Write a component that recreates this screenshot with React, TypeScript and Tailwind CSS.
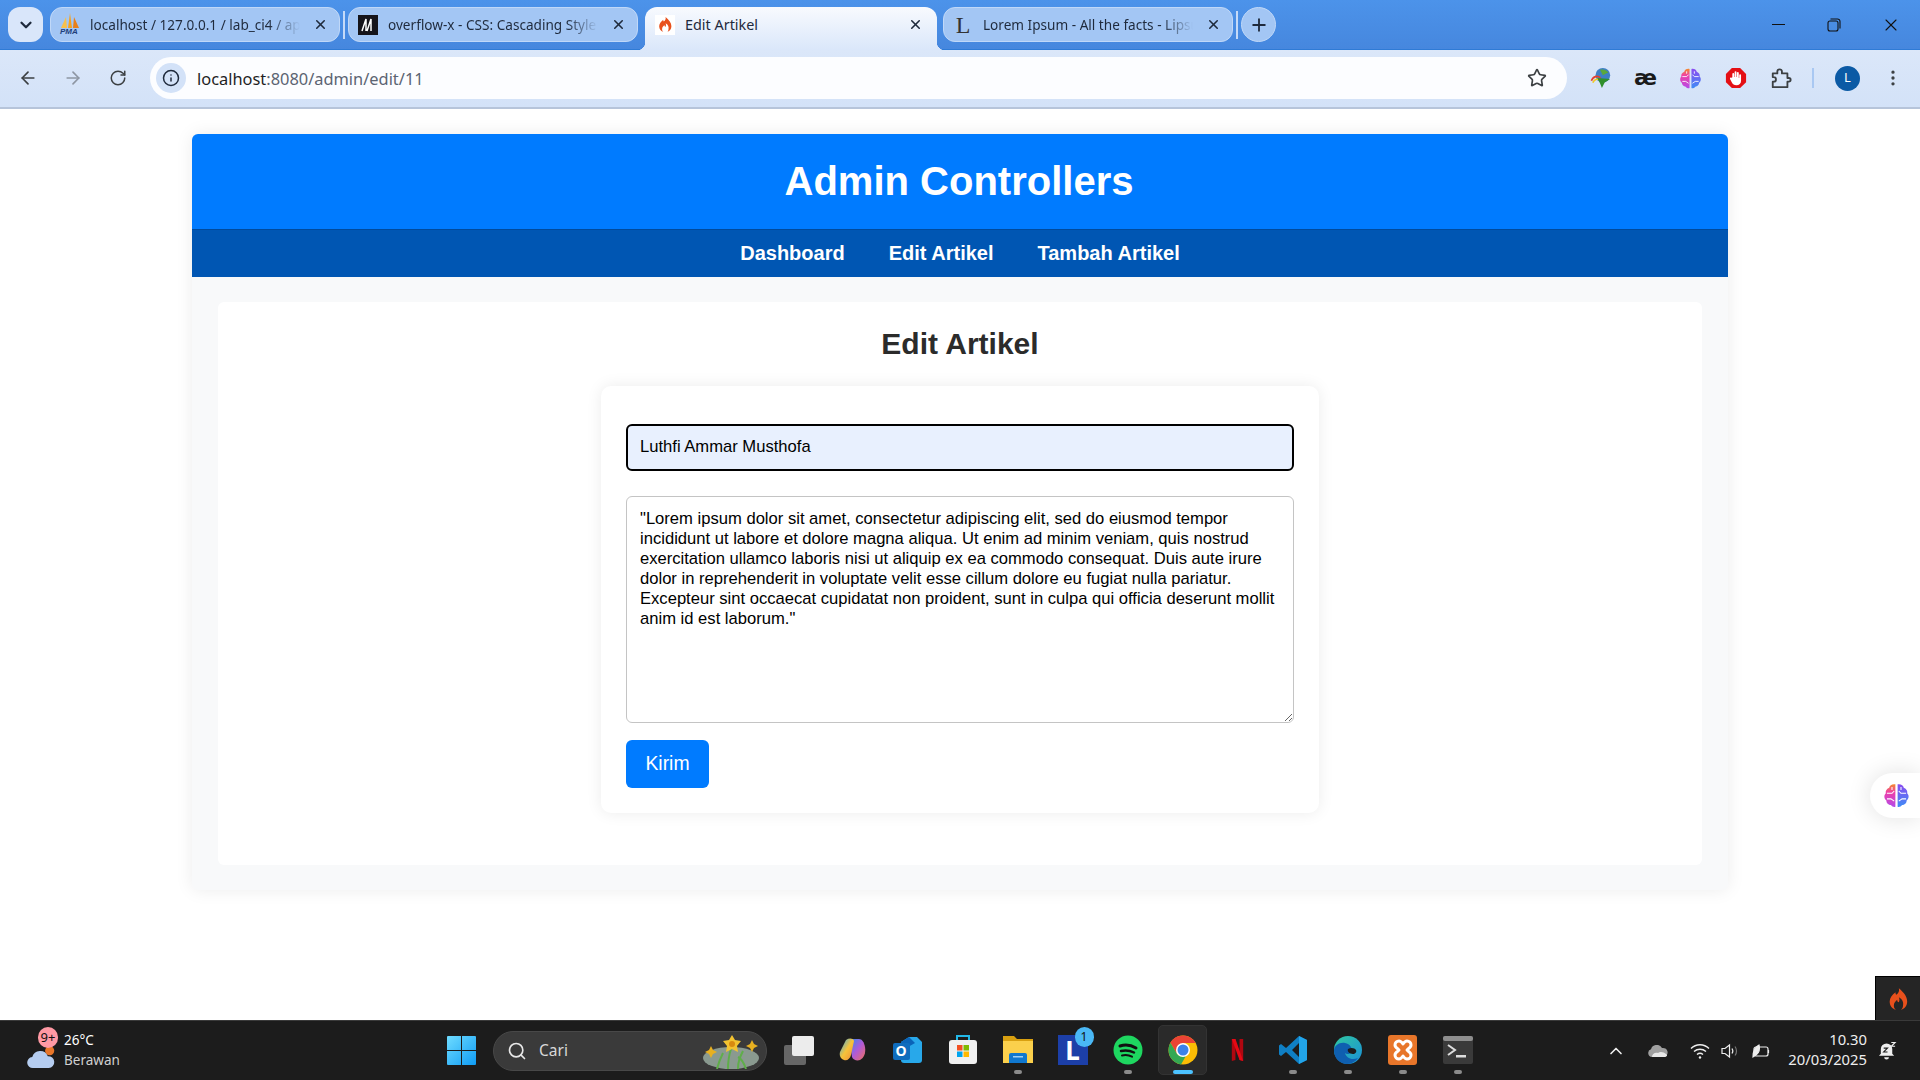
import React from 'react';
import { ArrowLeft, ArrowRight, ChevronDown, ChevronUp, EllipsisVertical, Info, Plus, RotateCw, Search, Star, X } from 'lucide-react';

const Flame = ({ className = '' }: { className?: string }) => (
    <svg viewBox="0 0 24 28" className={className}>
        <path
            fill="#e8501c"
            d="M13 1c1 4-1 6-3 8-1-1-1-2-1-3C5 9 2 13 2 17c0 5 3 9 8 10-2-1-3-3-3-5 0-3 2-5 4-7 0 2 1 3 2 3 1-2 1-4 0-6 4 2 6 6 5 10 0 2-1 4-3 5 5-1 8-5 8-10 0-6-4-11-10-16z"
        />
    </svg>
);

const Brain = ({ className = '', id }: { className?: string; id: string }) => (
    <svg viewBox="0 0 24 24" className={className}>
        <defs>
            <linearGradient id={`${id}L`} x1="0" y1="0" x2="0" y2="1">
                <stop offset="0" stopColor="#f58a2a" />
                <stop offset="0.35" stopColor="#ee3fa8" />
                <stop offset="1" stopColor="#b44be8" />
            </linearGradient>
            <linearGradient id={`${id}R`} x1="0" y1="0" x2="0" y2="1">
                <stop offset="0" stopColor="#8a4cf0" />
                <stop offset="1" stopColor="#3f8cf5" />
            </linearGradient>
        </defs>
        <path fill={`url(#${id}L)`} d="M11 2C8 1.500 6 3 5.500 5 3 6 2 8 2.500 10 0.500 12 1 15 3 16.500 3 19 5 20.500 7 20.500 8 22 10 22.500 11 22z" />
        <path fill={`url(#${id}R)`} d="M13 2c3-.5 5 1 5.500 3C21 6 22 8 21.500 10 23.500 12 23 15 21 16.500 21 19 19 20.500 17 20.500 16 22 14 22.500 13 22z" />
        <path stroke="#fff" strokeWidth="0.9" fill="none" d="M3.500 10H8l2-2M3.500 15H7l3 2M8 4.500V7M20.500 10H16l-2-2M20.500 15H17l-3 2M16 4.500V7" />
    </svg>
);

const PmaIcon = () => (
    <div className="relative w-5 h-6 shrink-0">
        <svg viewBox="0 0 20 18" className="absolute top-0 left-0 w-5 h-[18px]">
            <path fill="#f6a21d" d="M10 0l2 15H8z" />
            <path fill="#f8c04a" d="M6 4L7 15H1z" />
            <path fill="#e8801a" d="M14 4l5 11h-6z" />
        </svg>
        <span className="absolute left-0 top-[14px] text-[8px] leading-[9px] italic font-bold text-[#1f3f7a] font-['Liberation_Sans',sans-serif]">
            PMA
        </span>
    </div>
);

const MdnIcon = () => (
    <svg viewBox="0 0 20 20" className="w-5 h-5 shrink-0">
        <rect width="20" height="20" fill="#15141a" />
        <path d="M4 16L8 4v12M9 16l4-12v12" fill="none" stroke="#fff" strokeWidth="1.500" />
    </svg>
);

const LoremIcon = () => (
    <div className="w-5 h-6 shrink-0 flex items-center justify-center text-[#333] text-[24px] leading-none font-['Liberation_Serif',serif]">
        L
    </div>
);

const TabSeparator = ({ className = '' }: { className?: string }) => (
    <div className={`w-[2px] h-[28px] bg-[#c5daf8] shrink-0 ${className}`} />
);

const InactiveTab = ({ icon, title, width }: { icon: React.ReactNode; title: string; width: string }) => (
    <div className={`${width} h-[35px] shrink-0 flex items-center pl-[9px] pr-[11px] rounded-[12px] bg-[#a3c6f4] border border-[#c0d8f8] gap-[10px]`}>
        {icon}
        <span className="flex-1 min-w-0 pt-[1px] mr-[3px] overflow-hidden whitespace-nowrap text-[13.6px] text-[#1f2a3c] [mask-image:linear-gradient(to_right,black_85%,transparent)]">
            {title}
        </span>
        <X size={15} strokeWidth={2.5} className="text-[#1f2a3c] shrink-0" />
    </div>
);

const ActiveTab = () => (
    <div className="relative w-[292px] h-[43px] shrink-0 self-start flex items-center pl-[10px] pr-[14px] pb-[8px] rounded-t-[12px] bg-gradient-to-b from-[#f8fafe] to-[#dae7fa] gap-[10px]">
        <div className="absolute bottom-0 -left-[8px] w-[8px] h-[8px] bg-[radial-gradient(circle_at_0_0,transparent_8px,#dae7fa_8.5px)]" />
        <div className="absolute bottom-0 -right-[8px] w-[8px] h-[8px] bg-[radial-gradient(circle_at_100%_0,transparent_8px,#dae7fa_8.5px)]" />
        <div className="w-5 h-5 bg-white flex items-center justify-center shrink-0">
            <Flame className="w-[14px] h-[17px]" />
        </div>
        <span className="flex-1 pt-[1px] text-[14.4px] text-[#1f2a3c] whitespace-nowrap">Edit Artikel</span>
        <X size={15} strokeWidth={2.5} className="text-[#1f2a3c] shrink-0" />
    </div>
);

const IdmIcon = () => (
    <svg viewBox="0 0 24 24" className="w-[22px] h-[22px]">
        <circle cx="14" cy="9" r="8" fill="#3e7fc4" />
        <path fill="#5aa83c" d="M11 3c3-1 7 0 9 3l-6 3z" />
        <path fill="none" stroke="#e4402c" strokeWidth="1.800" d="M1.500 15c2-5 7-6 10-3" />
        <path fill="none" stroke="#f2c81e" strokeWidth="1.800" d="M3 17c2-4 6-5 9-2" />
        <path fill="#2f8f2c" d="M8 12l14 1-6 4-3 6-2-5z" />
    </svg>
);

const StopIcon = () => (
    <svg viewBox="0 0 24 24" className="w-[22px] h-[22px]">
        <path fill="#e40f14" d="M7.500 1h9L23 7.500v9L16.500 23h-9L1 16.500v-9z" />
        <path fill="#fff" d="M8 11V7.500a1 1 0 012 0V11h.5V5.500a1 1 0 012 0V11h.5V6.500a1 1 0 012 0V12h.5V9a1 1 0 012 0v6c0 3-2 5-5 5-2.500 0-4-1-5-3l-2-4c-.5-1 1-2 2-1z" />
    </svg>
);

const PuzzleIcon = () => (
    <svg viewBox="0 0 24 24" className="w-[22px] h-[22px]" fill="none" stroke="#3c4043" strokeWidth="2" strokeLinejoin="round">
        <path d="M3 7h5V5a2.500 2.500 0 015 0v2h6v5h1.500a2 2 0 010 4H19v6H3v-6h1a2.500 2.500 0 000-5H3z" />
    </svg>
);

const Chrome = () => (
    <div className="flex items-center justify-between pr-[17px] h-[59px] pb-[1px] bg-gradient-to-b from-[#dbe7f9] to-[#d3e2f8] border-b-2 border-[#b6c4da]">
        <div className="flex items-center">
            <ArrowLeft size={20} strokeWidth={2} className="ml-[18px] text-[#3c4043]" />
            <ArrowRight size={20} strokeWidth={2} className="ml-[25px] text-[#8e96a3]" />
            <RotateCw size={18} strokeWidth={2} className="ml-[26px] text-[#3c4043]" />
            <div className="ml-[23px] w-[1417px] h-[42px] rounded-full bg-[#fcfdff] flex items-center pl-[6px] pr-[20px]">
                <div className="w-[30px] h-[30px] rounded-full bg-[#d3e2f8] flex items-center justify-center">
                    <Info size={18} strokeWidth={2} className="text-[#1f2a3c]" />
                </div>
                <span className="ml-[11px] pt-[2px] text-[16.4px] text-[#1f1f1f]">
                    localhost<span className="text-[#5b6472]">:8080/admin/edit/11</span>
                </span>
                <Star size={20} strokeWidth={2} className="ml-auto text-[#3c4043]" />
            </div>
        </div>
        <div className="flex items-center">
            <div className="w-[45px] flex justify-center"><IdmIcon /></div>
            <div className="w-[45px] flex justify-center text-[22px] leading-none font-bold text-[#1a1a1a] font-['DejaVu_Sans',sans-serif]">æ</div>
            <div className="w-[45px] flex justify-center"><Brain id="toolbarBrain" className="w-[23px] h-[23px]" /></div>
            <div className="w-[45px] flex justify-center"><StopIcon /></div>
            <div className="w-[45px] flex justify-center"><PuzzleIcon /></div>
            <div className="w-[2px] h-5 bg-[#a9c8f2] ml-[9px] mr-[21px]" />
            <div className="w-[25px] h-[25px] rounded-full bg-[#0b5aa5] flex items-center justify-center text-white text-[13px]">L</div>
            <EllipsisVertical size={20} className="ml-[23px] text-[#3c4043]" />
        </div>
    </div>
);

const TabStrip = () => (
    <div className="h-[50px] shrink-0 flex items-center bg-gradient-to-b from-[#4c93ea] to-[#4687de] border-b border-[#2f7bd6]">
        <div className="ml-[8px] w-[35px] h-[35px] rounded-[12px] bg-[#d9e6fa] flex items-center justify-center self-start mt-[7px]">
            <ChevronDown size={18} strokeWidth={3} className="text-[#1f2a3c]" />
        </div>
        <div className="ml-[7px] flex items-start self-start mt-[7px]">
            <InactiveTab icon={<PmaIcon />} title="localhost / 127.0.0.1 / lab_ci4 / app" width="w-[290px]" />
            <TabSeparator className="mx-[3px] mt-[4px]" />
            <InactiveTab icon={<MdnIcon />} title="overflow-x - CSS: Cascading Style Sheets" width="w-[290px]" />
            <div className="w-[7px]" />
            <ActiveTab />
            <div className="w-[6px]" />
            <InactiveTab icon={<LoremIcon />} title="Lorem Ipsum - All the facts - Lipsum" width="w-[290px]" />
            <TabSeparator className="mx-[3px] mt-[4px]" />
            <div className="w-[35px] h-[35px] rounded-full bg-[#a3c6f4] border border-[#c0d8f8] flex items-center justify-center">
                <Plus size={20} strokeWidth={2.2} className="text-[#1f2a3c]" />
            </div>
        </div>
        <div className="ml-auto flex items-center text-[#111]">
            <div className="w-[56px] flex justify-center"><div className="w-[13px] h-[1.5px] bg-[#111]" /></div>
            <div className="w-[56px] flex justify-center">
                <svg viewBox="0 0 14 14" className="w-[14px] h-[14px]" fill="none" stroke="#111" strokeWidth="1.1">
                    <rect x="1" y="3" width="10" height="10" rx="2" />
                    <path d="M3.500 1h7a2.500 2.500 0 012.500 2.500v7" />
                </svg>
            </div>
            <div className="w-[58px] flex justify-center"><X size={20} strokeWidth={1.3} /></div>
        </div>
    </div>
);

const Page = () => (
    <div className="relative flex-1 bg-white overflow-hidden pt-[25px] font-['Liberation_Sans',Arial,sans-serif]">
        <div className="w-[1536px] mx-auto bg-[#f8f9fa] rounded-[6px] shadow-[0_0_18px_rgba(0,0,0,0.08)]">
            <header className="h-[95px] bg-[#007bff] rounded-t-[6px] flex items-center justify-center pb-[2px] pr-[2px]">
                <h1 className="text-[40px] leading-none font-bold text-white">Admin Controllers</h1>
            </header>
            <nav className="h-[48px] bg-[#0056b3] border-t border-[#004a9c] flex items-center justify-center gap-[44px] pb-[2px]">
                <a className="text-[20px] font-bold text-white">Dashboard</a>
                <a className="text-[20px] font-bold text-white">Edit Artikel</a>
                <a className="text-[20px] font-bold text-white">Tambah Artikel</a>
            </nav>
            <div className="px-[26px] pt-[25px] pb-[25px]">
                <div className="bg-white rounded-[6px] pt-[22px] pb-[52px]">
                    <h2 className="text-[30px] leading-[40px] font-bold text-[#2b2b2b] text-center">Edit Artikel</h2>
                    <form className="w-[718px] mx-auto mt-[22px] bg-white rounded-[10px] shadow-[0_0_16px_rgba(0,0,0,0.08)] px-[25px] pt-[38px] pb-[25px]">
                        <input
                            type="text"
                            defaultValue="Luthfi Ammar Musthofa"
                            className="block w-full h-[47px] px-[12px] pb-[2px] rounded-[6px] border-2 border-black bg-[#e8f0fe] text-[16.6px] text-black outline-none"
                        />
                        <textarea
                            rows={11}
                            defaultValue={'"Lorem ipsum dolor sit amet, consectetur adipiscing elit, sed do eiusmod tempor incididunt ut labore et dolore magna aliqua. Ut enim ad minim veniam, quis nostrud exercitation ullamco laboris nisi ut aliquip ex ea commodo consequat. Duis aute irure dolor in reprehenderit in voluptate velit esse cillum dolore eu fugiat nulla pariatur. Excepteur sint occaecat cupidatat non proident, sunt in culpa qui officia deserunt mollit anim id est laborum."'}
                            className="block w-full h-[227px] mt-[25px] px-[13px] py-[12px] rounded-[6px] border border-[#c4c4c4] bg-white text-[16.6px] leading-[20px] text-black outline-none"
                        />
                        <button type="button" className="block mt-[17px] w-[83px] h-[48px] rounded-[6px] bg-[#007bff] text-white text-[19.4px]">
                            Kirim
                        </button>
                    </form>
                </div>
            </div>
        </div>
        <div className="absolute right-0 top-[664px] w-[50px] h-[45px] bg-white rounded-l-full shadow-[0_0_24px_rgba(0,0,0,0.12)] flex items-center pl-[13px]">
            <Brain id="sideBrain" className="w-[27px] h-[27px]" />
        </div>
        <div className="absolute right-0 bottom-0 w-[45px] h-[44px] bg-[#252525] border-t border-l border-black flex items-center justify-center">
            <Flame className="w-[20px] h-[24px]" />
        </div>
    </div>
);

const TaskIcon = ({ children, dot = false, active = false }: { children: React.ReactNode; dot?: boolean; active?: boolean }) => (
    <div className="relative w-[55px] h-[59px] flex items-center justify-center pb-[2px]">
        {active && <div className="absolute left-[3px] top-[4px] w-[49px] h-[50px] rounded-[5px] bg-[#2a2a2a] border border-[#333]" />}
        <div className="relative">{children}</div>
        {dot && <div className="absolute bottom-[6px] left-[24px] w-[8px] h-[4px] rounded-full bg-[#8b8b8b]" />}
        {active && <div className="absolute bottom-[6px] left-[18px] w-[20px] h-[4px] rounded-full bg-[#4cc2ff]" />}
    </div>
);

const CopilotIcon = () => (
    <svg viewBox="0 0 28 28" className="w-[28px] h-[28px]">
        <defs>
            <linearGradient id="copA" x1="0" y1="0" x2="1" y2="1">
                <stop offset="0" stopColor="#2fa8f0" />
                <stop offset="0.5" stopColor="#f6c33a" />
                <stop offset="1" stopColor="#f08a3a" />
            </linearGradient>
            <linearGradient id="copB" x1="0" y1="0" x2="1" y2="1">
                <stop offset="0" stopColor="#2f8cf0" />
                <stop offset="0.5" stopColor="#b05ad8" />
                <stop offset="1" stopColor="#f0705a" />
            </linearGradient>
        </defs>
        <path fill="url(#copB)" d="M12 3h8c3 0 5 3 6 8 1 6-1 11-5 13-3 1-7 0-8-3L11 9z" />
        <path fill="url(#copA)" d="M7 4c3-2 7-2 8 1l-3 14c-1 4-4 6-7 5-3-1-5-4-4-8z" />
    </svg>
);

const OutlookIcon = () => (
    <div className="relative w-[30px] h-[30px]">
        <svg viewBox="0 0 30 30" className="absolute inset-0">
            <path fill="#28a8ea" d="M8 7l8-5h8l5 5v18a3 3 0 01-3 3H11a3 3 0 01-3-3z" />
            <path fill="#0a64b8" d="M8 7l8-5 6 6-14 8z" />
        </svg>
        <div className="absolute left-0 top-[8px] w-[17px] h-[17px] rounded-[2px] bg-[#0f6cbd] flex items-center justify-center text-white text-[14px] font-bold leading-none">O</div>
    </div>
);

const StoreIcon = () => (
    <svg viewBox="0 0 30 30" className="w-[30px] h-[30px]">
        <path fill="none" stroke="#22b8e8" strokeWidth="2" d="M9 7V1h12v6" />
        <rect x="1" y="5" width="28" height="24" rx="3" fill="#f0f0f0" />
        <rect x="9" y="10" width="5.500" height="5.500" fill="#f25022" />
        <rect x="15.500" y="10" width="5.500" height="5.500" fill="#7fba00" />
        <rect x="9" y="16.500" width="5.500" height="5.500" fill="#00a4ef" />
        <rect x="15.500" y="16.500" width="5.500" height="5.500" fill="#ffb900" />
    </svg>
);

const FolderIcon = () => (
    <svg viewBox="0 0 30 30" className="w-[30px] h-[30px]">
        <path fill="#d9a010" d="M0 1h11l3 3h16v24H0z" />
        <rect y="6" width="30" height="22" fill="#fbd04c" />
        <path fill="#1078d0" d="M6 20a2 2 0 012-2h14a2 2 0 012 2v8H6z" />
        <rect x="10" y="21" width="10" height="1.500" fill="#9fd0f5" />
    </svg>
);

const SpotifyIcon = () => (
    <svg viewBox="0 0 30 30" className="w-[30px] h-[30px]" fill="none" stroke="#111" strokeLinecap="round">
        <circle cx="15" cy="15" r="14.500" fill="#1ed760" stroke="none" />
        <path strokeWidth="3" d="M7 11c5-1.500 11-1 16 2" />
        <path strokeWidth="2.500" d="M8 16c4-1 9-.5 13 1.500" />
        <path strokeWidth="2" d="M9 20.500c3.500-.8 7-.4 10 1.200" />
    </svg>
);

const ChromeIcon = () => (
    <svg viewBox="0 0 30 30" className="w-[30px] h-[30px]">
        <circle cx="15" cy="15" r="14.500" fill="#fbbc04" />
        <path fill="#ea4335" d="M15 .5A14.500 14.500 0 002.400 7.800L8.800 18.600 15 8h12.600A14.500 14.500 0 0015 .5z" />
        <path fill="#34a853" d="M2.400 7.800A14.500 14.500 0 0013 29.400L19 19 15 21a6 6 0 01-6.200-2.400z" />
        <circle cx="15" cy="15" r="7" fill="#fff" />
        <circle cx="15" cy="15" r="5.500" fill="#3b82ea" />
    </svg>
);

const NetflixIcon = () => (
    <svg viewBox="0 0 16 28" className="w-[13px] h-[23px]">
        <path fill="#b00710" d="M1 1h4.500v26L1 28z" />
        <path fill="#b00710" d="M10.500 1H15v27l-4.500-1z" />
        <path fill="#e50914" d="M1 1h4.500L15 28l-4.500-1z" />
    </svg>
);

const VsCodeIcon = () => (
    <svg viewBox="0 0 30 30" className="w-[30px] h-[30px]">
        <path fill="#0f7fc4" fillRule="evenodd" d="M21 1l8 4v20l-8 4L8 17l-5 4-2-1.500V10.500L3 9l5 4zM21 8l-7 7 7 7z" />
        <path fill="#22a5ea" d="M21 1l8 4v20l-8 4z" />
    </svg>
);

const EdgeIcon = () => (
    <svg viewBox="0 0 30 30" className="w-[30px] h-[30px]">
        <defs>
            <linearGradient id="edgeA" x1="0" y1="0" x2="1" y2="1">
                <stop offset="0" stopColor="#30c8a0" />
                <stop offset="1" stopColor="#1a8fd8" />
            </linearGradient>
        </defs>
        <circle cx="15" cy="15" r="14" fill="url(#edgeA)" />
        <path fill="#0f5fb0" d="M1 16c0-6 6-9 11-8 5 1 8 5 6 9-1 2-4 3-6 1 1 4 6 8 13 5-3 4-7 6-11 6C7 29 1 23 1 16z" />
        <path fill="#1c1c1c" d="M15 14c3-2 7-1 8 1 1 2-1 4-3 4-4 0-6-3-5-5z" />
    </svg>
);

const XamppIcon = () => (
    <div className="w-[29px] h-[30px] rounded-[3px] bg-[#e8762a] flex items-center justify-center">
        <svg viewBox="0 0 24 24" className="w-[24px] h-[24px]" fill="none" stroke="#fff" strokeWidth="3" strokeLinejoin="round">
            <path d="M8 3a4 4 0 00-4 4c0 2 1.500 3 3 4l1 1-1 1c-1.500 1-3 2-3 4a4 4 0 004 4c2 0 3-1.500 4-3 1 1.500 2 3 4 3a4 4 0 004-4c0-2-1.500-3-3-4l-1-1 1-1c1.500-1 3-2 3-4a4 4 0 00-4-4c-2 0-3 1.500-4 3-1-1.500-2-3-4-3z" />
        </svg>
    </div>
);

const TerminalIcon = () => (
    <svg viewBox="0 0 30 30" className="w-[30px] h-[30px]">
        <rect y="1" width="30" height="28" rx="2" fill="#3a3a3a" />
        <rect y="1" width="30" height="5" rx="2" fill="#8e8e8e" />
        <path d="M5 10l7 5-7 5" fill="none" stroke="#ddd" strokeWidth="2" />
        <rect x="13" y="20" width="10" height="2.500" fill="#ddd" />
    </svg>
);

const Taskbar = () => (
    <div className="h-[60px] shrink-0 bg-[#1c1c1c] border-t border-[#3a3a3a] flex items-center text-white font-['Noto_Sans',sans-serif]">
        <div className="w-[447px] h-full flex items-center">
            <div className="relative ml-[25px] w-[30px] h-[30px] mt-[6px]">
                <svg viewBox="0 0 30 24" className="absolute left-0 bottom-0 w-[31px] h-[22px]">
                    <circle cx="25" cy="4" r="5" fill="#e8762a" />
                    <path fill="#b5cdf0" d="M7 23a6 6 0 01-1-12 9 9 0 0117-1 6.500 6.500 0 011 13z" />
                </svg>
                <div className="absolute left-[13px] top-[-12px] w-[20px] h-[21px] rounded-full bg-[#ff99a4] text-[#111] text-[13px] leading-[21px] text-center">9+</div>
            </div>
            <div className="ml-[9px] flex flex-col pb-[2px]">
                <span className="text-[13.5px] leading-[20px]">26°C</span>
                <span className="text-[13.5px] leading-[20px] text-[#d0d0d0]">Berawan</span>
            </div>
        </div>
        <svg viewBox="0 0 29 29" className="w-[29px] h-[29px] shrink-0">
            <defs>
                <linearGradient id="winG" x1="0" y1="0" x2="1" y2="1">
                    <stop offset="0" stopColor="#6fdcff" />
                    <stop offset="1" stopColor="#0f9cf5" />
                </linearGradient>
            </defs>
            <path fill="url(#winG)" d="M1 0h13v14H0V1a1 1 0 011-1zM15 0h13a1 1 0 011 1v13H15zM0 15h14v14H1a1 1 0 01-1-1zM15 15h14v13a1 1 0 01-1 1H15z" />
        </svg>
        <div className="relative ml-[17px] w-[274px] h-[40px] shrink-0 rounded-full bg-[#3a3a3a] border border-[#484848] flex items-center pl-[13px]">
            <Search size={20} strokeWidth={2} className="text-[#e8e8e8]" />
            <span className="ml-[12px] text-[15.5px] text-[#d8d8d8]">Cari</span>
            <svg viewBox="0 0 58 36" className="absolute right-[6px] top-[1px] w-[58px] h-[36px]">
                <ellipse cx="29" cy="25" rx="28" ry="11" fill="#8a9a90" />
                <path stroke="#5fae4a" strokeWidth="2" fill="none" d="M15 36c2-8 4-12 6-16M26 36c0-8 1-14 3-20M36 36c0-8 2-12 5-18M44 36c-2-6-4-10-8-12" />
                <path fill="#f2c230" d="M30 2l3 5 6 1-4 5 1 6-6-3-6 3 1-6-4-5 6-1z" />
                <circle cx="30" cy="11" r="3" fill="#d98a10" />
                <path fill="#e8b020" d="M50 7l2 4 4 2-4 2-2 4-2-4-4-2 4-2z" />
                <path fill="#e8b020" d="M9 13l2 4 4 2-4 2-2 4-2-4-4-2 4-2z" />
            </svg>
        </div>
        <div className="ml-[8px] w-[48px] flex justify-center shrink-0">
            <div className="relative w-[30px] h-[29px]">
                <div className="absolute left-0 bottom-0 w-[22px] h-[20px] rounded-[2px] bg-[#666]" />
                <div className="absolute right-0 top-0 w-[22px] h-[20px] rounded-[2px] bg-[#ececec]" />
            </div>
        </div>
        <div className="w-[2px]" />
        <TaskIcon><CopilotIcon /></TaskIcon>
        <TaskIcon><OutlookIcon /></TaskIcon>
        <TaskIcon><StoreIcon /></TaskIcon>
        <TaskIcon dot><FolderIcon /></TaskIcon>
        <TaskIcon>
            <div className="w-[30px] h-[30px] bg-[#1c3fa8] flex items-center justify-center text-white text-[26px] font-bold leading-none">L</div>
            <div className="absolute -right-[6px] -top-[8px] w-[19px] h-[20px] rounded-full bg-[#4ab8f5] text-[#111] text-[12px] leading-[20px] text-center">1</div>
        </TaskIcon>
        <TaskIcon dot><SpotifyIcon /></TaskIcon>
        <TaskIcon active><ChromeIcon /></TaskIcon>
        <TaskIcon><NetflixIcon /></TaskIcon>
        <TaskIcon dot><VsCodeIcon /></TaskIcon>
        <TaskIcon dot><EdgeIcon /></TaskIcon>
        <TaskIcon dot><XamppIcon /></TaskIcon>
        <TaskIcon dot><TerminalIcon /></TaskIcon>
        <div className="ml-auto flex items-center">
            <ChevronUp size={20} strokeWidth={2} className="mr-[22px] text-[#eee]" />
            <svg viewBox="0 0 20 12" className="w-[20px] h-[12px] mr-[22px]">
                <path fill="#a0a0a0" d="M4 12a4 4 0 01-1-7.800A6 6 0 0114 3a4.500 4.500 0 012 9z" />
                <path fill="#e8e8e8" d="M4 12c0-3 3-5 6-4 2-2 6-1 8 1 2 1 1 3-2 3z" />
            </svg>
            <svg viewBox="0 0 20 16" className="w-[20px] h-[16px] mr-[11px]" fill="none" stroke="#eee" strokeWidth="1.4">
                <path d="M1 5.500c5-5 13-5 18 0M4 8.500c3.500-3 8.500-3 12 0M7 11.500c1.800-1.500 4.200-1.500 6 0" />
                <circle cx="10" cy="14.500" r="1.200" fill="#eee" stroke="none" />
            </svg>
            <svg viewBox="0 0 20 16" className="w-[20px] h-[16px] mr-[9px]" fill="none" stroke="#eee" strokeWidth="1.2">
                <path d="M1 5.500h3L8.500 2v12L4 10.500H1z" />
                <path d="M11 5.500c1 1.500 1 3.500 0 5" />
                <path d="M14 3.500c2 2.500 2 6.500 0 9" stroke="#777" />
            </svg>
            <svg viewBox="0 0 20 16" className="w-[20px] h-[16px]" fill="none" stroke="#eee" strokeWidth="1.2">
                <rect x="4" y="4" width="14" height="9" rx="2" />
                <path d="M18.500 7v3" />
                <path d="M3 14c0-6 2-10 6-12 1 4 0 8-3 10z" fill="#eee" />
            </svg>
            <div className="ml-[18px] flex flex-col items-end pb-[3px] text-[14.8px] leading-[20px] text-[#eee]">
                <span>10.30</span>
                <span>20/03/2025</span>
            </div>
            <svg viewBox="0 0 20 20" className="w-[19px] h-[20px] ml-[11px] mr-[23px]">
                <path fill="#eee" d="M9 2a6 6 0 016 6v5l2 2H1l2-2V8a6 6 0 016-6zM6.500 16.500h5a2.500 2.500 0 01-5 0z" />
                <path fill="none" stroke="#1c1c1c" strokeWidth="1.2" d="M6 7h4l-4 4h4" />
                <path fill="none" stroke="#eee" strokeWidth="1.2" d="M14 1h4l-4 4h4" />
            </svg>
        </div>
    </div>
);

export default function App() {
    return (
        <div className="w-[1920px] h-[1080px] flex flex-col overflow-hidden font-['Noto_Sans',sans-serif]">
            <TabStrip />
            <Chrome />
            <Page />
            <Taskbar />
        </div>
    );
}
